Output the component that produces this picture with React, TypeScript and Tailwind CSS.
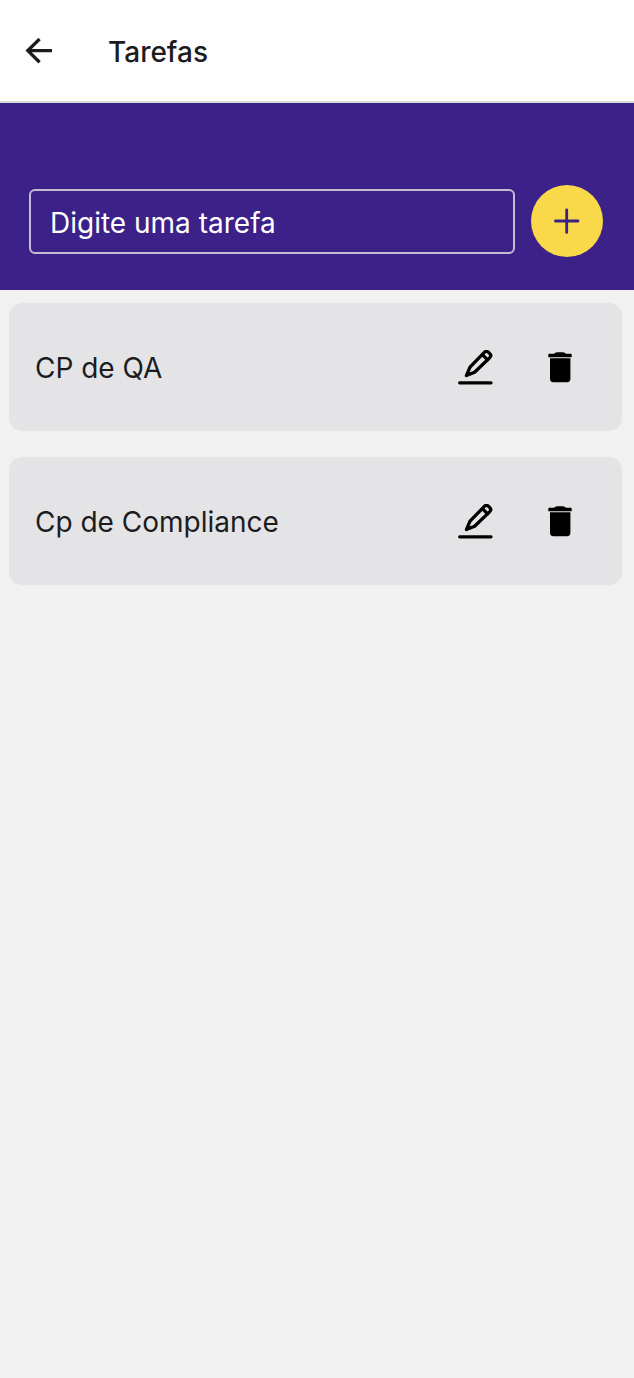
import { useState } from "react";

const initialTasks = ["CP de QA", "Cp de Compliance"];

function ArrowIcon() {
  return (
    <svg width="28" height="28" viewBox="0 0 28 28" fill="none" stroke="#1c1c1e" strokeWidth="3.3" aria-hidden="true">
      <path d="M28 12.6H3.6M15.6 1L3.8 12.6l11.8 11.6" />
    </svg>
  );
}

function PlusIcon() {
  return (
    <svg width="26" height="26" viewBox="0 0 26 26" fill="none" stroke="#3c2189" strokeWidth="2.8" strokeLinecap="round" aria-hidden="true">
      <path d="M12.7 1.8v22.6M1.4 13h22.6" />
    </svg>
  );
}

function PencilIcon() {
  return (
    <svg width="36" height="36" viewBox="0 0 36 36" fill="none" stroke="#000" strokeWidth="3.3" strokeLinejoin="round" strokeLinecap="round" aria-hidden="true">
      <path d="M8.4 25.6L12 17.2L26.6 2.2Q28.4 .4 30.4 2.2L31.8 3.6Q33.8 5.6 31.8 7.6L16.6 22.2Z" />
      <path d="M24.4 4.6L29.6 9.8" />
      <path d="M1.7 32.8H33" />
    </svg>
  );
}

function TrashIcon() {
  return (
    <svg width="24" height="32" viewBox="0 0 24 32" fill="#000" aria-hidden="true">
      <path d="M.3 2.6Q.3 1.8 1.1 1.8H6Q7 .2 9 .2H15Q17 .2 18 1.8H22.9Q23.7 1.8 23.7 2.6V5.2H.3Z" />
      <path d="M2 6.2H22.4V26.8Q22.4 30.2 19 30.2H5.4Q2 30.2 2 26.8Z" />
    </svg>
  );
}

export default function App() {
  const [tasks, setTasks] = useState(initialTasks);
  const [text, setText] = useState("");

  const add = () => {
    if (!text.trim()) return;
    setTasks([...tasks, text.trim()]);
    setText("");
  };
  const remove = (index: number) => setTasks(tasks.filter((_, i) => i !== index));
  const edit = (index: number) => {
    setText(tasks[index]);
    remove(index);
  };

  return (
    <div className="min-h-screen bg-[#f1f1f1] font-['Inter',sans-serif] text-[#1c1c1e]">
      <header className="flex h-[103px] items-center gap-14 border-b-2 border-[#d8d8d8] bg-white px-6 pt-0.5">
        <button type="button" aria-label="Voltar" className="flex">
          <ArrowIcon />
        </button>
        <h1 className="text-[28px] leading-9 font-medium">Tarefas</h1>
      </header>
      <form
        className="flex items-center gap-4 bg-[#3c2189] pt-[82px] pr-[31px] pb-[33px] pl-[29px]"
        onSubmit={(e) => {
          e.preventDefault();
          add();
        }}
      >
        <input
          type="text"
          aria-label="Digite uma tarefa"
          placeholder="Digite uma tarefa"
          value={text}
          onChange={(e) => setText(e.target.value)}
          className="h-[65px] min-w-0 flex-1 rounded-md border-2 border-[#c3bcd2] bg-transparent px-[19px] pt-1 text-[28px] text-white outline-none placeholder:text-white"
        />
        <button type="submit" aria-label="Adicionar" className="flex size-[72px] shrink-0 items-center justify-center rounded-full bg-[#f9d849]">
          <PlusIcon />
        </button>
      </form>
      <ul className="flex flex-col gap-[26px] py-[13px] pr-3 pl-[9px]">
        {tasks.map((task, i) => (
          <li key={i} className="flex min-h-32 items-center rounded-[13px] bg-[#e4e4e6] pt-0.5 pr-[50px] pl-[26px]">
            <span className="min-w-0 flex-1 text-[28px] leading-9">{task}</span>
            <button type="button" aria-label={`Editar ${task}`} className="mr-[54px] flex" onClick={() => edit(i)}>
              <PencilIcon />
            </button>
            <button type="button" aria-label={`Excluir ${task}`} className="flex" onClick={() => remove(i)}>
              <TrashIcon />
            </button>
          </li>
        ))}
      </ul>
    </div>
  );
}
